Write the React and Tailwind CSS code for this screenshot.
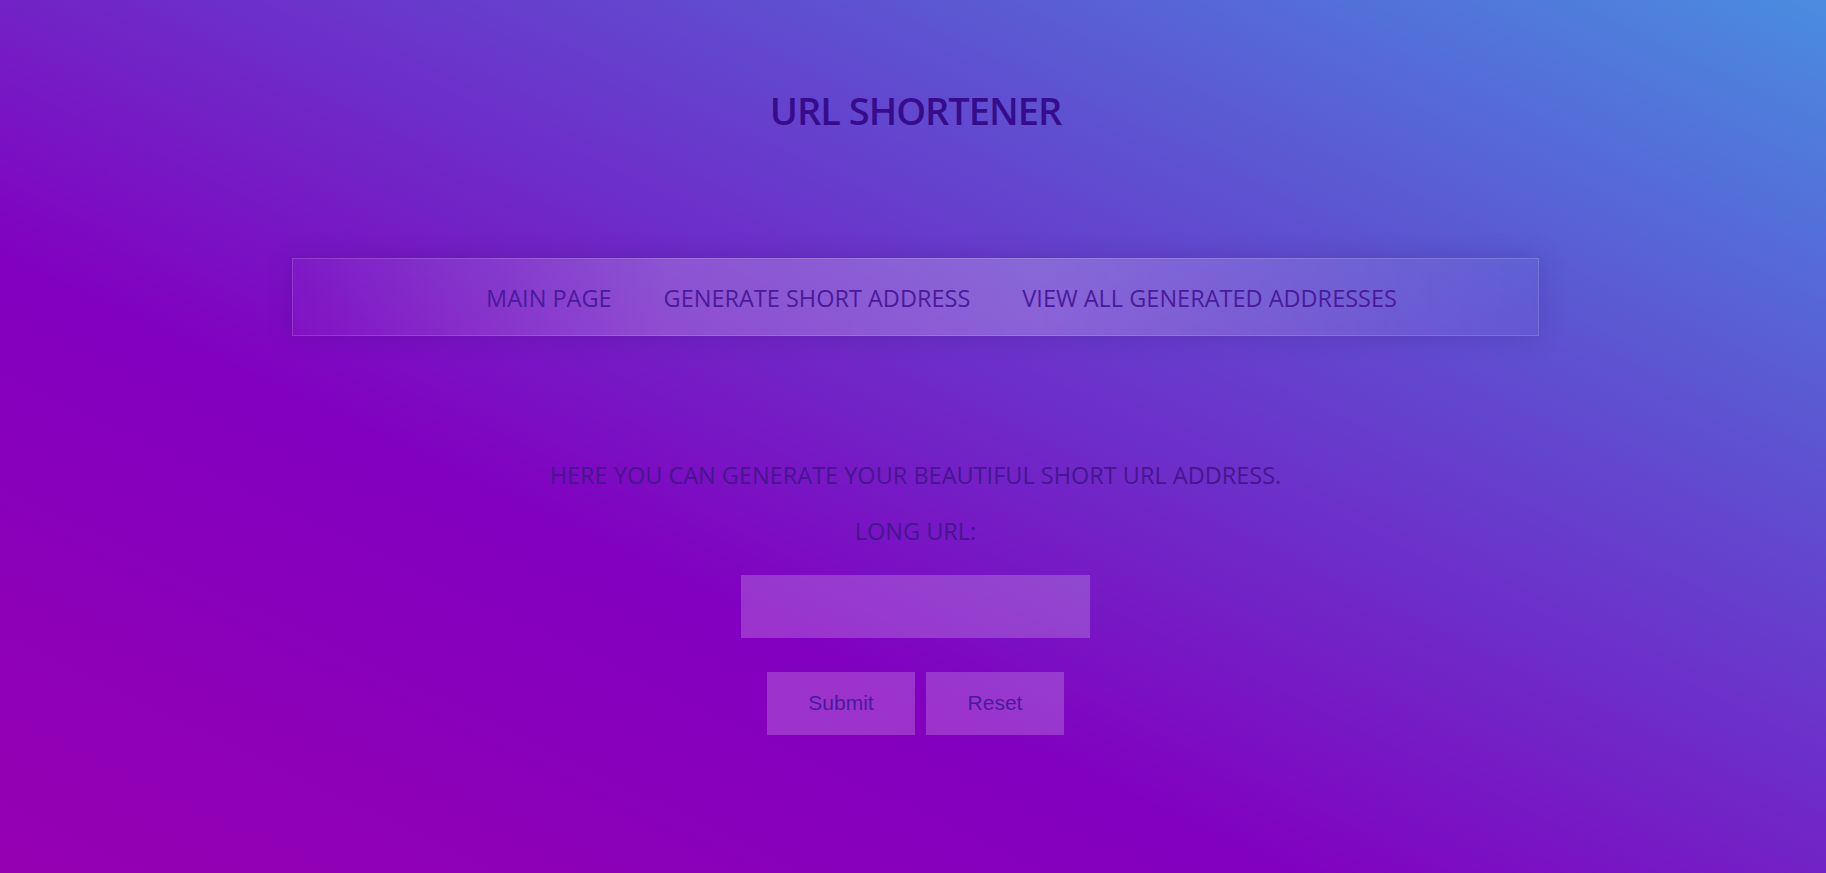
export default function App() {
  const links = ['Main page', 'Generate short address', 'View all generated addresses']

  return (
    <div
      className="min-h-screen w-full flex flex-col items-center pl-[5px] bg-[linear-gradient(to_top_right,#9600b2_0%,#8200c0_35%,#7222c6_50%,#5c56d2_75%,#4a8ce0_100%)]"
      style={{ fontFamily: '"Open Sans", "Liberation Sans", sans-serif' }}
    >
      <h1 className="pt-[86px] text-[38px] leading-[48px] font-semibold tracking-[-1px] text-[#370c8c]">URL SHORTENER</h1>

      <nav className="mt-[124px] w-[1247px] h-[78px] border border-white/15 shadow-[0_0_24px_rgba(40,0,90,0.18)] bg-[linear-gradient(to_right,rgba(255,255,255,0.03)_0%,rgba(255,255,255,0.2)_30%,rgba(255,255,255,0.22)_60%,rgba(255,255,255,0.03)_100%)]">
        <ul className="h-full flex items-center justify-center gap-[52px] pl-[52px] pt-[4px]">
          {links.map((l) => (
            <li key={l} className="text-[23.5px] uppercase text-[#4a1a9c] cursor-pointer">{l}</li>
          ))}
        </ul>
      </nav>

      <p className="mt-[123px] text-[23.5px] leading-[32px] uppercase text-[#46158f]">
        Here you can generate your beautiful short URL address.
      </p>
      <label className="mt-[24px] text-[23.5px] leading-[32px] uppercase text-[#46158f]">Long URL:</label>
      <input className="mt-[28px] w-[349px] h-[63px] bg-white/20 outline-none px-3 text-[20px] text-[#46158f]" />

      <div className="mt-[34px] flex gap-[11px]" style={{ fontFamily: '"Liberation Sans", Arial, sans-serif' }}>
        <button className="w-[148px] h-[63px] pb-[2px] bg-white/20 text-[21px] text-[#4a1a9c]">Submit</button>
        <button className="w-[138px] h-[63px] pb-[2px] bg-white/20 text-[21px] text-[#4a1a9c]">Reset</button>
      </div>
    </div>
  )
}
